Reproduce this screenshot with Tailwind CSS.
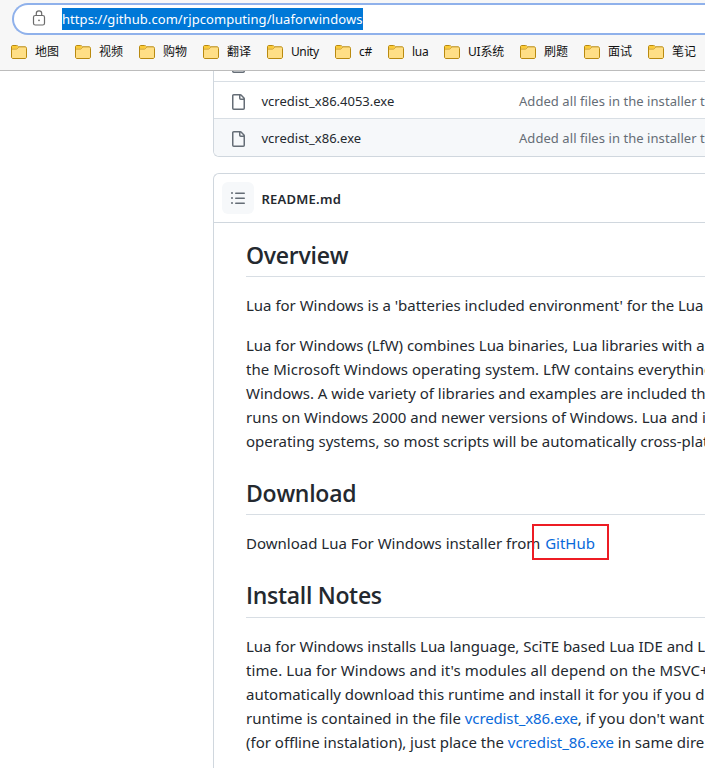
<!DOCTYPE html>
<html lang="en">
<head>
<meta charset="utf-8">
<title>rjpcomputing/luaforwindows</title>
<script src="https://cdn.jsdelivr.net/npm/@tailwindcss/browser@4"></script>
</head>
<body class="h-[768px] w-[705px] overflow-hidden bg-white font-['Noto_Sans','Noto_Sans_CJK_SC',sans-serif] text-[#24292f]">
<svg class="hidden" xmlns="http://www.w3.org/2000/svg">
  <symbol id="folder" viewBox="0 0 16 16">
    <path d="M1.800 1.500h3.800c.5 0 .8.2 1.100.5l.8.8h6.500c.9 0 1.500.6 1.500 1.500v8.700c0 .9-.6 1.500-1.500 1.500H2c-.9 0-1.500-.6-1.500-1.500V2.800c0-.8.5-1.300 1.300-1.300z" fill="#ffdf86" stroke="#b98a10" stroke-width="1"/>
    <path d="M1 2.900c0-.6.300-.9.900-.9h3.600c.4 0 .6.1.8.4l.9.900-1 1c-.2.200-.4.300-.7.300H1z" fill="#fccb36"/>
    <path d="M.8 5.100h4.500c.4 0 .7-.1 1-.4l1.400-1.400" fill="none" stroke="#c99a20" stroke-width=".9"/>
  </symbol>
  <symbol id="file" viewBox="0 0 16 16">
    <path d="M2 1.750C2 .784 2.784 0 3.750 0h6.586c.464 0 .909.184 1.237.513l2.914 2.914c.329.328.513.773.513 1.237v9.586A1.750 1.750 0 0 1 13.250 16h-9.500A1.750 1.750 0 0 1 2 14.250Zm1.750-.250a.250.250 0 0 0-.250.250v12.500c0 .138.112.250.250.250h9.500a.250.250 0 0 0 .250-.250V6h-2.750A1.750 1.750 0 0 1 9 4.250V1.500Zm6.750.062V4.250c0 .138.112.250.250.250h2.688l-.011-.013-2.914-2.914-.013-.011Z"/>
  </symbol>
</svg>

<header class="relative z-10 flex h-[71px] flex-col border-b border-[#bcbcbc] bg-[#f7f7f7] pt-[3px]">
  <div class="ml-3 flex h-8 shrink-0 items-center rounded-l-full border-2 border-r-0 border-[#8fb1eb] bg-white pl-[17px]">
    <svg class="mb-[2px] h-[18px] w-4 shrink-0" viewBox="0 0 16 18" fill="none" stroke="#6b6b6b" stroke-width="1.200">
      <rect x="2.500" y="6.500" width="11" height="9.500" rx="1.800"/>
      <path d="M5.300 6.500V4.500a2.700 2.700 0 0 1 5.400 0v2"/>
      <circle cx="8" cy="11.300" r=".9" fill="#6b6b6b" stroke="none"/>
    </svg>
    <span class="ml-[15px] h-[22px] w-[301px] bg-[#0078d7] text-[13px] leading-[22px] tracking-[0.068px] whitespace-nowrap text-white">https://github.com/rjpcomputing/luaforwindows</span>
  </div>
  <nav class="flex items-center overflow-hidden pt-[7px] pl-[11px] text-xs leading-5 whitespace-nowrap text-[#111]">
    <div class="flex w-16 shrink-0 items-center gap-2"><svg class="h-4 w-4"><use href="#folder"/></svg>地图</div>
    <div class="flex w-16 shrink-0 items-center gap-2"><svg class="h-4 w-4"><use href="#folder"/></svg>视频</div>
    <div class="flex w-16 shrink-0 items-center gap-2"><svg class="h-4 w-4"><use href="#folder"/></svg>购物</div>
    <div class="flex w-16 shrink-0 items-center gap-2"><svg class="h-4 w-4"><use href="#folder"/></svg>翻译</div>
    <div class="flex w-[68px] shrink-0 items-center gap-2 tracking-[-0.4px]"><svg class="h-4 w-4"><use href="#folder"/></svg>Unity</div>
    <div class="flex w-[53px] shrink-0 items-center gap-2 tracking-[-0.3px]"><svg class="h-4 w-4"><use href="#folder"/></svg>c#</div>
    <div class="flex w-14 shrink-0 items-center gap-2 tracking-[-0.3px]"><svg class="h-4 w-4"><use href="#folder"/></svg>lua</div>
    <div class="flex w-[76px] shrink-0 items-center gap-2 tracking-[-0.2px]"><svg class="h-4 w-4"><use href="#folder"/></svg>UI系统</div>
    <div class="flex w-16 shrink-0 items-center gap-2"><svg class="h-4 w-4"><use href="#folder"/></svg>刷题</div>
    <div class="flex w-16 shrink-0 items-center gap-2"><svg class="h-4 w-4"><use href="#folder"/></svg>面试</div>
    <div class="flex shrink-0 items-center gap-2"><svg class="h-4 w-4"><use href="#folder"/></svg>笔记</div>
  </nav>
</header>

<main class="ml-[213px] overflow-hidden whitespace-nowrap">
  <section class="h-[86px] overflow-hidden rounded-bl-md border-b border-l border-[#d0d7de] text-[13px]">
    <div class="flex h-2.5 items-end pl-4"><svg class="mb-2 h-4 w-4 shrink-0 fill-[#656d76]"><use href="#file"/></svg></div>
    <div class="flex h-[37px] items-center border-t border-[#d8dee4] pl-4">
      <svg class="mt-1 h-4 w-4 shrink-0 fill-[#656d76]"><use href="#file"/></svg>
      <span class="ml-[15.5px] w-[257.5px] shrink-0 pt-[3px]">vcredist_x86.4053.exe</span>
      <span class="pt-[3px] tracking-[0.06px] text-[#656d76]">Added all files in the installer t</span>
    </div>
    <div class="flex h-[38px] items-center border-t border-[#d8dee4] bg-[#f6f8fa] pl-4">
      <svg class="mt-[3px] h-4 w-4 shrink-0 fill-[#656d76]"><use href="#file"/></svg>
      <span class="ml-[15.5px] w-[257.5px] shrink-0 pt-[2px]">vcredist_x86.exe</span>
      <span class="pt-[2px] tracking-[0.06px] text-[#656d76]">Added all files in the installer t</span>
    </div>
  </section>

  <section class="mt-4 h-[600px] rounded-tl-md border-t border-l border-[#d0d7de]">
    <div class="flex h-[49px] items-center border-b border-[#d0d7de] pl-2">
      <div class="mb-px flex h-8 w-8 items-center justify-center rounded-md bg-[#f6f8fa]">
        <svg class="h-4 w-4 fill-[#656d76]" viewBox="0 0 16 16"><path d="M5.750 2.500h8.500a.75.75 0 0 1 0 1.500h-8.500a.75.75 0 0 1 0-1.500Zm0 5h8.500a.75.75 0 0 1 0 1.500h-8.500a.75.75 0 0 1 0-1.500Zm0 5h8.500a.75.75 0 0 1 0 1.500h-8.500a.75.75 0 0 1 0-1.500ZM2 14a1 1 0 1 1 0-2 1 1 0 0 1 0 2Zm1-6a1 1 0 1 1-2 0 1 1 0 0 1 2 0ZM2 4a1 1 0 1 1 0-2 1 1 0 0 1 0 2Z"/></svg>
      </div>
      <h2 class="ml-[7.500px] pt-[3px] text-[13px] font-semibold tracking-[0.233px]">README.md</h2>
    </div>
    <article class="pt-4 pl-8 text-[15px] leading-6">
      <h2 class="h-[38px] border-b border-[#d8dee4] font-['Open_Sans',sans-serif] text-[23px] leading-[32px] font-semibold tracking-[-0.26px]">Overview</h2>
      <p class="mt-4 tracking-[-0.013px]">Lua for Windows is a 'batteries included environment' for the Lua</p>
      <p class="mt-4">
        <span class="block tracking-[-0.033px]">Lua for Windows (LfW) combines Lua binaries, Lua libraries with a</span>
        <span class="block tracking-[0.026px]">the Microsoft Windows operating system. LfW contains everything</span>
        <span class="block tracking-[-0.021px]">Windows. A wide variety of libraries and examples are included th</span>
        <span class="block">runs on Windows 2000 and newer versions of Windows. Lua and i</span>
        <span class="block tracking-[-0.019px]">operating systems, so most scripts will be automatically cross-plat</span>
      </p>
      <h2 class="mt-6 h-[38px] border-b border-[#d8dee4] font-['Open_Sans',sans-serif] text-[23px] leading-[32px] font-semibold tracking-[-0.26px]">Download</h2>
      <p class="mt-4">Download Lua For Windows installer from <span class="relative ml-px text-[#0969da]">GitHub<span class="absolute -top-[9px] -left-[13px] h-9 w-[77px] border-2 border-[#ed1c24]"></span></span></p>
      <h2 class="mt-[25px] h-[38px] border-b border-[#d8dee4] font-['Open_Sans',sans-serif] text-[23px] leading-[30px] font-semibold tracking-[-0.3px]">Install Notes</h2>
      <p class="mt-4">
        <span class="block tracking-[-0.027px]">Lua for Windows installs Lua language, SciTE based Lua IDE and L</span>
        <span class="block tracking-[0.096px]">time. Lua for Windows and it's modules all depend on the MSVC+</span>
        <span class="block">automatically download this runtime and install it for you if you d</span>
        <span class="block">runtime is contained in the file <span class="tracking-[-0.119px] text-[#0969da]">vcredist_x86.exe</span><span class="tracking-[0.04px]">, if you don't want</span></span>
        <span class="block">(for offline instalation), just place the <span class="tracking-[-0.064px] text-[#0969da]">vcredist_86.exe</span> in same dire</span>
      </p>
    </article>
  </section>
</main>
</body>
</html>
